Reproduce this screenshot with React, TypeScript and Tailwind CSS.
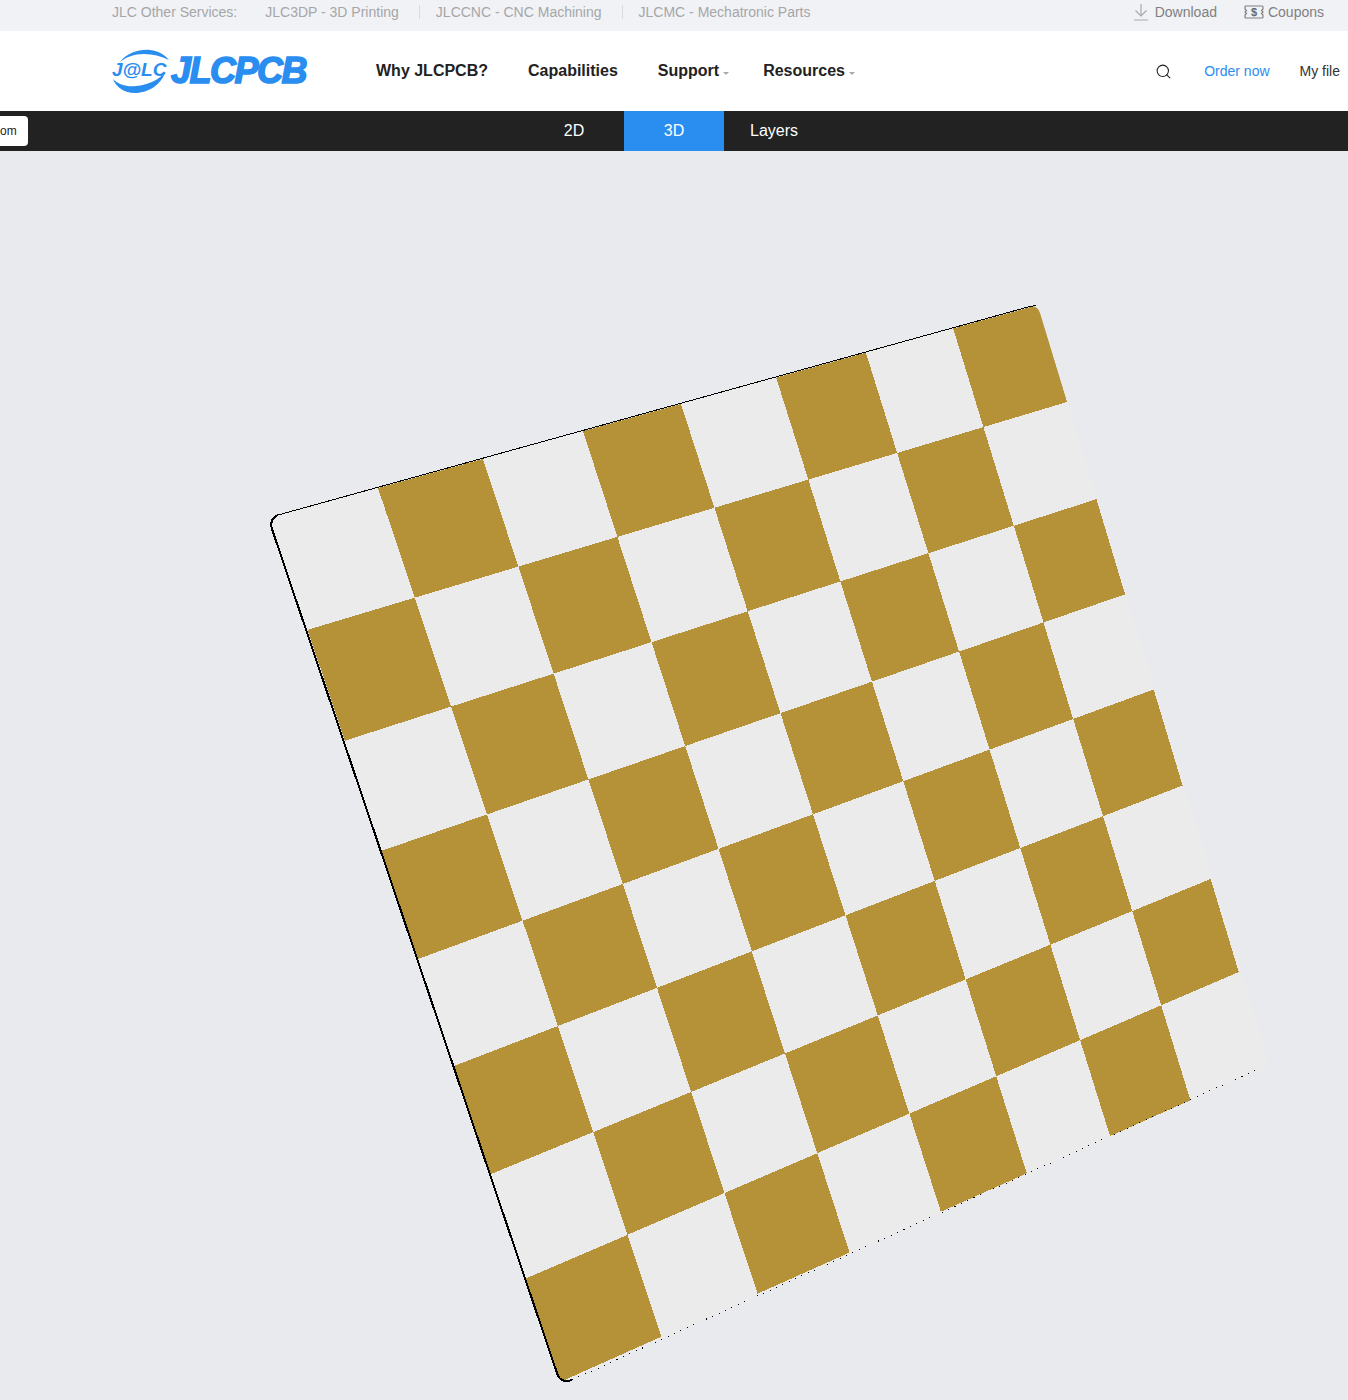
import { Search } from "lucide-react";

type Pt = [number, number];

// points measured along the board edges, 9 per side (8 x 8 cells)
const TOP: Pt[] = [[270, 518], [378, 488], [483, 459], [583, 431], [681, 404], [776, 377], [866, 353], [953, 328], [1038, 305]];
const BOTTOM: Pt[] = [[560, 1382], [662, 1338], [758, 1295], [850, 1254], [941, 1212], [1027, 1174], [1110, 1136], [1190, 1099], [1267, 1066]];
const LEFT: Pt[] = [[270, 518], [307, 630], [344, 741], [381, 851], [418, 959], [454, 1066], [491, 1174], [527, 1278], [560, 1382]];
const RIGHT: Pt[] = [[1038, 305], [1067, 402], [1097, 499], [1126, 594], [1155, 689], [1184, 785], [1213, 878], [1241, 971], [1267, 1066]];

const BOARD_OUTLINE =
  "M278 515 L1028 307 Q1037 304 1040 313 L1267 1056 Q1269 1065 1261 1069 L572 1379 Q563 1384 558 1376 L272 529 Q269 519 278 515 Z";

const intersect = (a: Pt, b: Pt, c: Pt, d: Pt): Pt => {
  const d1x = b[0] - a[0];
  const d1y = b[1] - a[1];
  const d2x = d[0] - c[0];
  const d2y = d[1] - c[1];
  const t = ((c[0] - a[0]) * d2y - (c[1] - a[1]) * d2x) / (d1x * d2y - d1y * d2x);
  return [a[0] + t * d1x, a[1] + t * d1y];
};

const vertex = (col: number, row: number) =>
  intersect(TOP[col], BOTTOM[col], LEFT[row], RIGHT[row]);

const goldCells = () => {
  const cells: string[] = [];
  for (let row = 0; row < 8; row++) {
    for (let col = 0; col < 8; col++) {
      if ((row + col) % 2 === 0) continue;
      const pts = [vertex(col, row), vertex(col + 1, row), vertex(col + 1, row + 1), vertex(col, row + 1)];
      cells.push(pts.map((p) => p.join(",")).join(" "));
    }
  }
  return cells;
};

const Board = () => (
  <svg viewBox="0 151 1348 1249" className="block h-[1249px] w-[1348px]" shapeRendering="crispEdges">
    <defs>
      <clipPath id="board-clip">
        <path d={BOARD_OUTLINE} />
      </clipPath>
    </defs>
    <path d={BOARD_OUTLINE} fill="#ebebeb" />
    <g clipPath="url(#board-clip)">
      {goldCells().map((points) => (
        <polygon key={points} points={points} fill="#b59138" />
      ))}
    </g>
    {/* top edge */}
    <path d="M278 515 L1028 307 Q1033 305.500 1036 306" fill="none" stroke="#000" strokeWidth="1" />
    {/* left edge, heavier */}
    <path d="M278 515 Q269 519 272 529 L558 1376 Q562 1383 572 1380" fill="none" stroke="#000" strokeWidth="2" />
    {/* bottom edge breaks up into dots */}
    <path d="M572 1380 L1258 1069" fill="none" stroke="#000" strokeWidth="1" strokeDasharray="1 6" />
  </svg>
);

const Logo = () => (
  <div className="relative h-[46px] w-[200px]">
    <svg viewBox="0 0 60 46" className="absolute left-0 top-0 h-[46px] w-[60px]" fill="#2a8df0">
      <path d="M8 14 C15 5 27 1 38 2 C47 3 53 7 57 12 C49 8 41 6 32 6 C22 6 14 9 8 14 Z" />
      <path d="M1 31 C7 37 15 39 24 38 C36 37 46 32 53 25 C49 36 37 45 23 45 C12 45 4 39 1 31 Z" />
    </svg>
    <span className="absolute left-0 top-[12px] font-['Liberation_Sans',sans-serif] text-[19px] font-bold italic leading-[20px] text-[#2a8df0]">
      J@LC
    </span>
    <span className="absolute left-[59px] top-[3px] font-['Liberation_Sans',sans-serif] text-[36px] font-bold italic leading-[40px] tracking-[-1.500px] text-[#2a8df0] [-webkit-text-stroke:1.500px_#2a8df0]">
      JLCPCB
    </span>
  </div>
);

const Divider = () => <span className="h-[14px] w-px bg-[#d9dbe0]" />;

const App = () => {
  return (
    <div className="w-[1348px] overflow-hidden bg-[#e8eaed] font-['Liberation_Sans',Arial,sans-serif]">
      {/* services bar */}
      <div className="flex h-[31px] items-center bg-[#f0f2f6] pb-[9px] pl-[112px] pr-6 pt-px text-sm text-[#a6a6a6]">
        <span>JLC Other Services:</span>
        <span className="ml-7">JLC3DP - 3D Printing</span>
        <span className="ml-5 mr-4 flex"><Divider /></span>
        <span>JLCCNC - CNC Machining</span>
        <span className="ml-5 mr-4 flex"><Divider /></span>
        <span>JLCMC - Mechatronic Parts</span>
        <div className="ml-auto flex items-center text-[#808080]">
          <svg viewBox="0 0 16 18" className="mr-[6px] h-[18px] w-[16px]" fill="none" stroke="#a9a9a9" strokeWidth="1.200">
            <path d="M8 1 V13 M2.500 7.500 L8 13 L13.500 7.500 M1 17 H15" />
          </svg>
          <span>Download</span>
          <svg viewBox="0 0 20 14" className="ml-[27px] mr-1 h-[14px] w-5" fill="none" stroke="#808080" strokeWidth="1.200">
            <path d="M2 1 H18 Q19 1 19 2 V4 L17.500 5.500 L19 7 L17.500 8.500 L19 10 V12 Q19 13 18 13 H2 Q1 13 1 12 V10 L2.500 8.500 L1 7 L2.500 5.500 L1 4 V2 Q1 1 2 1 Z" />
            <text x="10" y="11" textAnchor="middle" fontSize="11" fontWeight="700" fill="#666" stroke="none">$</text>
          </svg>
          <span>Coupons</span>
        </div>
      </div>

      {/* main nav */}
      <div className="flex h-20 items-center bg-white pl-[112px] pr-2">
        <Logo />
        <nav className="ml-[64px] flex items-center text-base font-bold text-[#222]">
          <span>Why JLCPCB?</span>
          <span className="ml-10">Capabilities</span>
          <span className="ml-10">Support</span>
          <span className="ml-1 mt-1 h-0 w-0 border-x-[3px] border-t-[3px] border-x-transparent border-t-[#aaa]" />
          <span className="ml-[34px]">Resources</span>
          <span className="ml-1 mt-1 h-0 w-0 border-x-[3px] border-t-[3px] border-x-transparent border-t-[#aaa]" />
        </nav>
        <div className="ml-auto flex items-center text-sm">
          <Search size={17} strokeWidth={1.500} className="text-[#222]" />
          <span className="ml-[32px] text-[#2a8df0]">Order now</span>
          <span className="ml-[30px] text-[#333]">My file</span>
        </div>
      </div>

      {/* view tabs */}
      <div className="relative flex h-10 justify-center bg-[#222] pl-[-4px] text-base text-white">
        <div className="absolute left-0 top-[5px] flex h-[30px] w-7 items-center rounded-r-sm bg-white text-xs text-[#222]">
          om
        </div>
        <div className="flex items-center">
          <span className="flex h-10 w-[100px] items-center justify-center">2D</span>
          <span className="flex h-10 w-[100px] items-center justify-center bg-[#2a8df0]">3D</span>
          <span className="flex h-10 w-[100px] items-center justify-center">Layers</span>
        </div>
      </div>

      <Board />
    </div>
  );
};

export default App;
